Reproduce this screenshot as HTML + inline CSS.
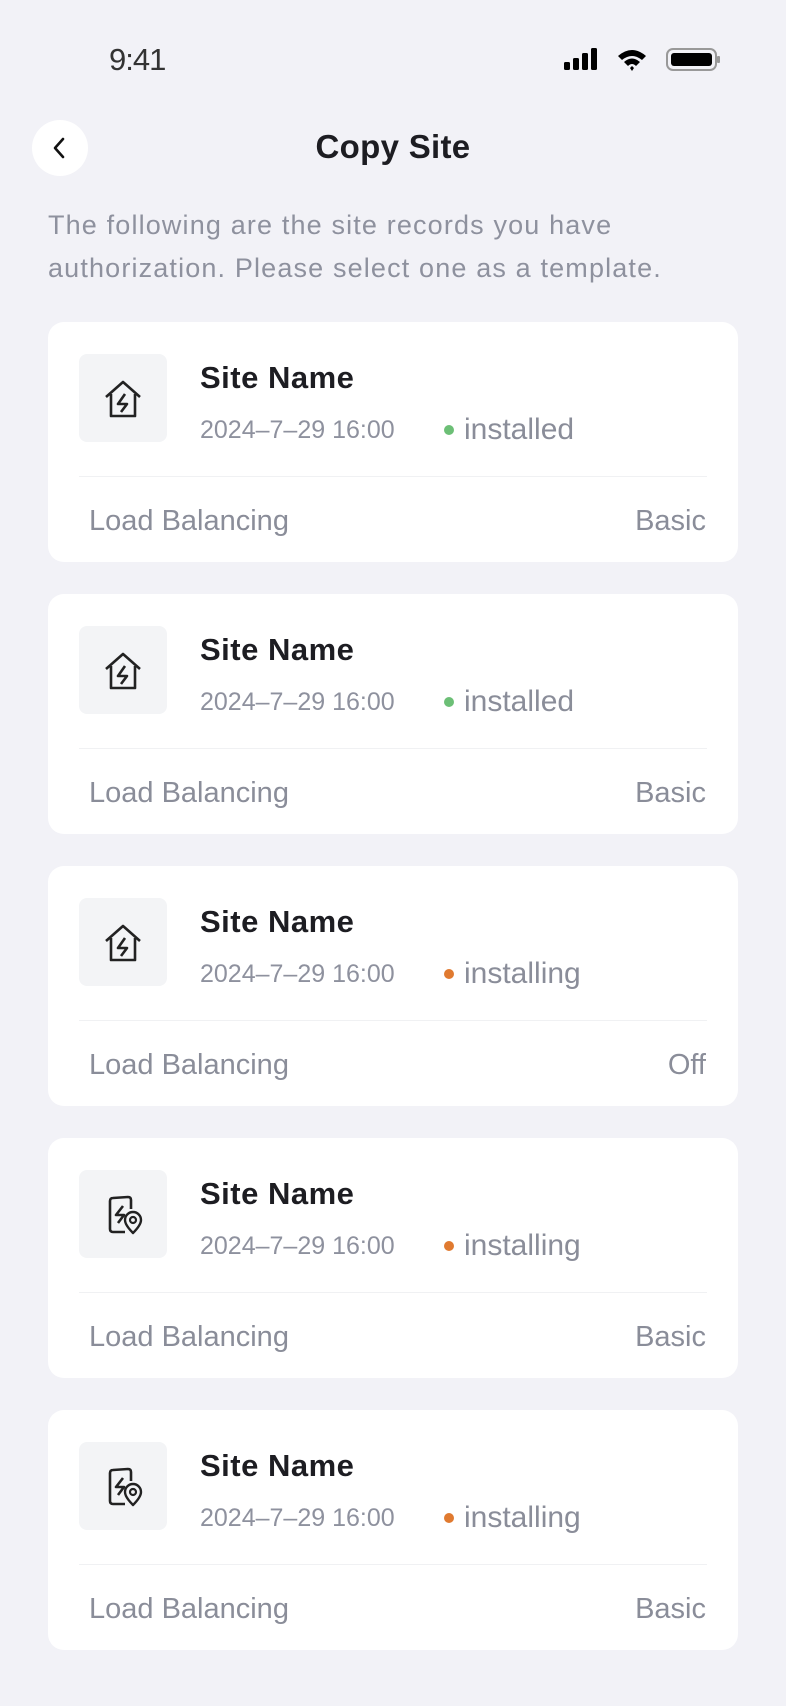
<!DOCTYPE html>
<html><head><meta charset="utf-8"><style>
*{margin:0;padding:0;box-sizing:border-box}
body{width:786px;height:1706px;background:#f2f2f7;font-family:"Liberation Sans",sans-serif;position:relative;overflow:hidden}
.abs{position:absolute}
.card{position:absolute;left:48px;width:690px;height:240px;background:#fff;border-radius:16px}
.ib{position:absolute;left:31px;top:32px;width:88px;height:88px;background:#f3f4f6;border-radius:8px}
.ib svg{position:absolute;left:22px;top:23px}
.nm{position:absolute;left:152px;top:38px;font-size:31px;color:#1d1d22;font-weight:bold;letter-spacing:0.5px}
.dt{position:absolute;left:152px;top:94px;font-size:25px;color:#8e919e}
.dot{position:absolute;left:396px;top:103px;width:10px;height:10px;border-radius:50%}
.st{position:absolute;left:416px;top:91px;font-size:30px;color:#8a8d99}
.hr{position:absolute;left:31px;right:31px;top:154px;height:1px;background:#f0f1f3}
.fl{position:absolute;left:41px;top:183px;font-size:29px;color:#8a8d99}
.fr{position:absolute;right:32px;top:183px;font-size:29px;color:#8a8d99}
</style></head><body>
<div class="abs" style="left:109px;top:42px;font-size:31px;color:#333;font-weight:300;letter-spacing:-1px">9:41</div>
<svg class="abs" style="left:563px;top:47px" width="158" height="28" viewBox="0 0 158 28">
<rect x="1" y="15" width="6" height="8" rx="1.5" fill="#000"/><rect x="10" y="11" width="6" height="12" rx="1.5" fill="#000"/><rect x="19" y="6" width="6" height="17" rx="1.5" fill="#000"/><rect x="28" y="1" width="6" height="22" rx="1.5" fill="#000"/>
<path d="M55 9 Q69 -3 83 9 L79 13 Q69 5 59 13Z M61 15 Q69 8 77 15 L73 19 Q69 15 65 19Z M67 21 L69 19 L71 21 L69 24Z" fill="#000"/>
<rect x="104" y="2" width="49" height="21" rx="6" fill="none" stroke="#999" stroke-width="2"/>
<rect x="108" y="6" width="41" height="13" rx="3" fill="#000"/><rect x="154" y="9" width="3" height="7" rx="1" fill="#999"/>
</svg>
<div class="abs" style="left:32px;top:120px;width:56px;height:56px;border-radius:50%;background:#fff"></div>
<svg class="abs" style="left:48px;top:134px" width="24" height="28" viewBox="0 0 24 28"><path d="M15 5 L7 14 L15 23" fill="none" stroke="#111" stroke-width="2.6" stroke-linecap="round" stroke-linejoin="round"/></svg>
<div class="abs" style="left:0;width:786px;top:128px;text-align:center;font-size:33px;font-weight:bold;color:#1d1d22;letter-spacing:0.3px">Copy Site</div>
<div class="abs" style="left:48px;top:204px;font-size:27px;letter-spacing:1.15px;line-height:43px;color:#8e919e;white-space:nowrap">The following are the site records you have<br>authorization. Please select one as a template.</div>

<div class="card" style="top:322px"><div class="ib"><svg width="44" height="44" viewBox="0 0 44 44"><path d="M5 20 L22 5 L39 20 M10 17 V39 H34 V17" fill="none" stroke="#222" stroke-width="2.6" stroke-linejoin="round"/><path d="M24 17 L17 27 H26 L20 35" fill="none" stroke="#222" stroke-width="2.6" stroke-linejoin="round"/></svg></div><div class="nm">Site Name</div><div class="dt">2024–7–29 16:00</div><div class="dot" style="background:#6cbf76"></div><div class="st">installed</div><div class="hr"></div><div class="fl">Load Balancing</div><div class="fr">Basic</div></div>
<div class="card" style="top:594px"><div class="ib"><svg width="44" height="44" viewBox="0 0 44 44"><path d="M5 20 L22 5 L39 20 M10 17 V39 H34 V17" fill="none" stroke="#222" stroke-width="2.6" stroke-linejoin="round"/><path d="M24 17 L17 27 H26 L20 35" fill="none" stroke="#222" stroke-width="2.6" stroke-linejoin="round"/></svg></div><div class="nm">Site Name</div><div class="dt">2024–7–29 16:00</div><div class="dot" style="background:#6cbf76"></div><div class="st">installed</div><div class="hr"></div><div class="fl">Load Balancing</div><div class="fr">Basic</div></div>
<div class="card" style="top:866px"><div class="ib"><svg width="44" height="44" viewBox="0 0 44 44"><path d="M5 20 L22 5 L39 20 M10 17 V39 H34 V17" fill="none" stroke="#222" stroke-width="2.6" stroke-linejoin="round"/><path d="M24 17 L17 27 H26 L20 35" fill="none" stroke="#222" stroke-width="2.6" stroke-linejoin="round"/></svg></div><div class="nm">Site Name</div><div class="dt">2024–7–29 16:00</div><div class="dot" style="background:#e07a30"></div><div class="st">installing</div><div class="hr"></div><div class="fl">Load Balancing</div><div class="fr">Off</div></div>
<div class="card" style="top:1138px"><div class="ib"><svg width="44" height="44" viewBox="0 0 44 44"><path d="M24 39 H12 Q9 39 9 36 V8 Q9 5 12 5 L27 4 Q30 4 30 7 V16" fill="none" stroke="#222" stroke-width="2.6" stroke-linejoin="round"/><path d="M22 13 L15 22 H23 L17 30" fill="none" stroke="#222" stroke-width="2.6" stroke-linejoin="round"/><path d="M32 40 Q24 32 24 27 A8 8 0 0 1 40 27 Q40 32 32 40Z" fill="none" stroke="#222" stroke-width="2.4" stroke-linejoin="round"/><circle cx="32" cy="27" r="3" fill="none" stroke="#222" stroke-width="2.2"/></svg></div><div class="nm">Site Name</div><div class="dt">2024–7–29 16:00</div><div class="dot" style="background:#e07a30"></div><div class="st">installing</div><div class="hr"></div><div class="fl">Load Balancing</div><div class="fr">Basic</div></div>
<div class="card" style="top:1410px"><div class="ib"><svg width="44" height="44" viewBox="0 0 44 44"><path d="M24 39 H12 Q9 39 9 36 V8 Q9 5 12 5 L27 4 Q30 4 30 7 V16" fill="none" stroke="#222" stroke-width="2.6" stroke-linejoin="round"/><path d="M22 13 L15 22 H23 L17 30" fill="none" stroke="#222" stroke-width="2.6" stroke-linejoin="round"/><path d="M32 40 Q24 32 24 27 A8 8 0 0 1 40 27 Q40 32 32 40Z" fill="none" stroke="#222" stroke-width="2.4" stroke-linejoin="round"/><circle cx="32" cy="27" r="3" fill="none" stroke="#222" stroke-width="2.2"/></svg></div><div class="nm">Site Name</div><div class="dt">2024–7–29 16:00</div><div class="dot" style="background:#e07a30"></div><div class="st">installing</div><div class="hr"></div><div class="fl">Load Balancing</div><div class="fr">Basic</div></div>
</body></html>
